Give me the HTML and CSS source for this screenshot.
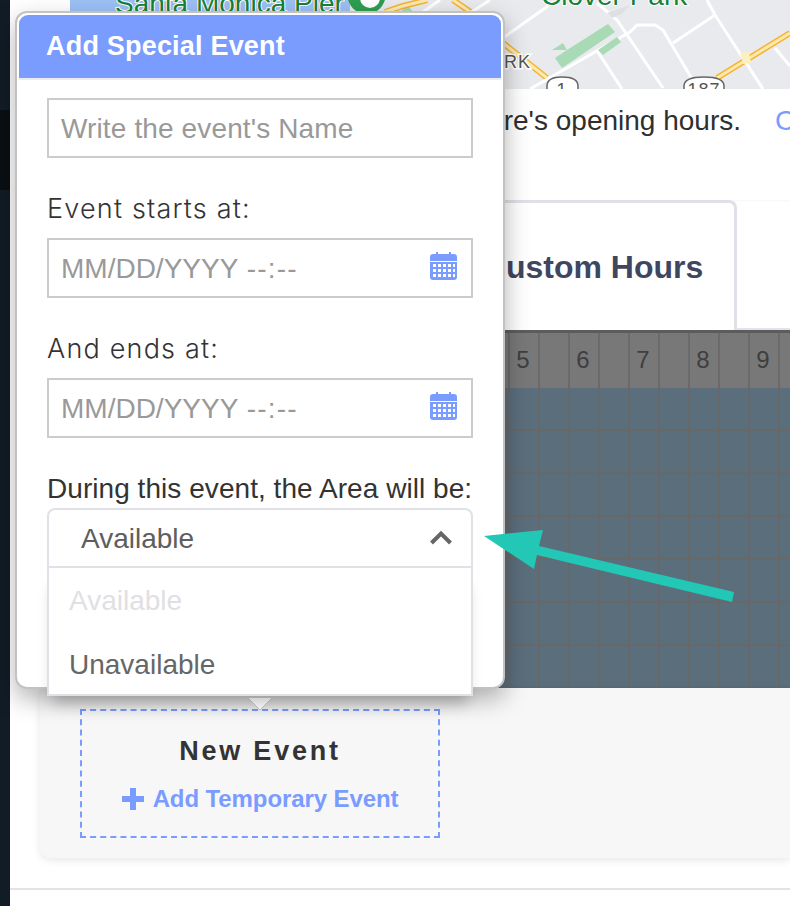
FILE: index.html
```html
<!DOCTYPE html>
<html lang="en">
<head>
<meta charset="utf-8">
<title>Add Special Event</title>
<link rel="stylesheet" href="styles.css">
</head>
<body>
<div class="page">
  <aside class="rail"></aside>
  <main class="main">
    <svg class="map" width="720" height="89" viewBox="70 0 720 89" aria-label="Map">
      <rect x="70" y="0" width="720" height="89" fill="#e8eaed"/>
      <rect x="70" y="0" width="280" height="89" fill="#9cc0f5"/>
      <path fill="#a8dab5" d="M398 13L408 6L414 13Z"/>
      <path class="road" d="M420 14L440 0"/>
      <path class="road-hw" d="M385 12L403 6L427 0M453 0L472 13M503 43L547 78M717 78L790 33"/>
      <path class="road-hw-in" d="M385 12L403 6L427 0M453 0L472 13M503 43L547 78M717 78L790 33"/>
      <path class="road" d="M503 38L548 6M597 3L617 20L663 88M530 89L630 32L637 25L655 25L663 30L698 89M673 43L715 15L763 89M707 0L715 15M598 52L622 89M775 48L790 66M470 13L490 0"/>
      <path fill="#dfe0e4" d="M607 13L630 5L622 14L612 18Z"/>
      <path fill="#a8dab5" d="M552 50L563 43L567 50L608 24L615 32L562 68L555 58L567 50Z"/>
      <path fill="#a8dab5" d="M598 50L617 37L621 42L603 55Z"/>
      <path fill="#fdf0c0" d="M740 53L749 52L751 63L743 64Z"/>
      <circle cx="366.500" cy="-5" r="19" fill="#2e9e4f"/>
      <circle cx="370" cy="-2" r="10" fill="#fff"/>
      <text class="map-label" x="115" y="13">Santa Monica Pier</text>
      <text class="map-label" x="541" y="5">Clover Park</text>
      <text class="map-small" x="531" y="68" text-anchor="end">ARK</text>
      <path class="shield" d="M547 92V86Q547 77 562 77Q578 77 578 86V92"/>
      <text class="map-shield-num" x="562" y="96" text-anchor="middle">1</text>
      <path class="shield" d="M684 92V86Q684 77 704 77Q724 77 724 86V92"/>
      <text class="map-shield-num" x="704" y="96" text-anchor="middle">187</text>
    </svg>
    <div class="intro">
      <p class="intro-text">store's opening hours.</p>
      <a class="intro-link">Change</a>
    </div>
    <div class="tabs">
      <div class="tab">Custom Hours</div>
    </div>
    <section class="schedule">
      <div class="hours">
        <span class="hour">5</span><span class="hour">6</span><span class="hour">7</span><span class="hour">8</span><span class="hour">9</span>
      </div>
      <div class="slots"></div>
    </section>
    <section class="card">
      <div class="new-event">
        <div class="new-title">New Event</div>
        <a class="new-link">
          <svg class="plus" width="22" height="22" viewBox="0 0 22 22"><path d="M8 0h6v8h8v6h-8v8H8v-8H0V8h8z"/></svg>
          <span>Add Temporary Event</span>
        </a>
      </div>
    </section>
    <hr class="rule">
  </main>
</div>

<div class="popup">
  <header class="popup-head">Add Special Event</header>
  <div class="popup-body">
    <div class="field"><span class="ph ph-name">Write the event's Name</span></div>
    <label class="label">Event starts at:</label>
    <div class="field">
      <span class="ph ph-date">MM/DD/YYYY <span class="ph-time">--:--</span></span>
      <svg class="cal" width="27" height="28" viewBox="0 0 27 28">
        <path fill="#7a9cff" d="M3 2h3V0h2v2h11V0h2v2h3q3 0 3 3v4H0V5q0-3 3-3zM0 10h27v15q0 3-3 3H3q-3 0-3-3z"/>
        <path fill="#fff" d="M3 12h3v3H3zM8 12h3v3H8zM13 12h3v3h-3zM18 12h3v3h-3zM23 12h2v3h-2zM3 17h3v3H3zM8 17h3v3H8zM13 17h3v3h-3zM18 17h3v3h-3zM23 17h2v3h-2zM3 22h3v3H3zM8 22h3v3H8zM13 22h3v3h-3zM18 22h3v3h-3zM23 22h2v3h-2z"/>
      </svg>
    </div>
    <label class="label">And ends at:</label>
    <div class="field">
      <span class="ph ph-date">MM/DD/YYYY <span class="ph-time">--:--</span></span>
      <svg class="cal" width="27" height="28" viewBox="0 0 27 28">
        <path fill="#7a9cff" d="M3 2h3V0h2v2h11V0h2v2h3q3 0 3 3v4H0V5q0-3 3-3zM0 10h27v15q0 3-3 3H3q-3 0-3-3z"/>
        <path fill="#fff" d="M3 12h3v3H3zM8 12h3v3H8zM13 12h3v3h-3zM18 12h3v3h-3zM23 12h2v3h-2zM3 17h3v3H3zM8 17h3v3H8zM13 17h3v3h-3zM18 17h3v3h-3zM23 17h2v3h-2zM3 22h3v3H3zM8 22h3v3H8zM13 22h3v3h-3zM18 22h3v3h-3zM23 22h2v3h-2z"/>
      </svg>
    </div>
    <div class="during">During this event, the Area will be:</div>
    <div class="select">
      <div class="select-head">
        <span class="select-value">Available</span>
        <svg class="chevron" width="22" height="15" viewBox="0 0 22 15"><path d="M1.500 13L11 3.500l9.500 9.500" fill="none" stroke="#666" stroke-width="4"/></svg>
      </div>
      <div class="select-menu">
        <div class="option option-off">Available</div>
        <div class="option">Unavailable</div>
      </div>
    </div>
  </div>
  <svg class="pointer" width="26" height="13" viewBox="0 0 26 13"><path d="M1 0L13 12L25 0" fill="#fff" stroke="#c4c4c4"/></svg>
</div>

<svg class="callout" width="254" height="76" viewBox="484 528 254 76" aria-hidden="true">
  <path fill="#22c7b6" d="M484 536L543 530L539 546L734 592L732 602L537 555L534 569Z"/>
</svg>
</body>
</html>
```
FILE: styles.css
```css
* { box-sizing: border-box; }
html, body { margin: 0; padding: 0; }
body {
  width: 790px;
  height: 906px;
  overflow: hidden;
  position: relative;
  background: #fff;
  font-family: "Liberation Sans", Arial, sans-serif;
  color: #333;
}
.page { display: flex; height: 906px; }
.rail {
  flex: 0 0 10px;
  background: linear-gradient(#121c26 0, #121c26 110px, #0a0f14 110px, #0a0f14 190px, #121c26 190px);
}
.main { flex: 1; min-width: 0; display: flex; flex-direction: column; }

.map { display: block; margin-left: 60px; flex: none; }
.road { fill: none; stroke: #fff; stroke-width: 3; }
.road-hw { fill: none; stroke: #f5b32e; stroke-width: 6; }
.road-hw-in { fill: none; stroke: #fde9b0; stroke-width: 3; }
.map-label { font-size: 28px; fill: #188038; stroke: #fff; stroke-width: 2px; paint-order: stroke; }
.map-small { font-size: 18px; letter-spacing: 1px; fill: #555; stroke: #fff; stroke-width: 3px; paint-order: stroke; }
.map-shield-num { font-size: 18px; letter-spacing: 1px; fill: #555; }
.shield { fill: #fff; stroke: #666; stroke-width: 1.5; }

.intro { height: 111px; flex: none; display: flex; gap: 34px; margin-left: 60px; white-space: nowrap; }
.intro-text { margin: 0; flex: 0 0 671px; padding-top: 16px; text-align: right; font-size: 28px; line-height: 32px; color: #2f2f2f; }
.intro-link { padding-top: 16px; font-size: 28px; line-height: 32px; color: #7a9cff; }

.tabs {
  height: 130px;
  flex: none;
  margin-left: 30px;
  padding-left: 403px;
  display: flex;
  border-bottom: 2px solid #e2e3ec;
  background: linear-gradient(#f6f6f6 0, #fff 2px);
}
.tab {
  width: 294px;
  margin-bottom: -2px;
  border: 3px solid #dfe0e8;
  border-bottom: none;
  border-left: none;
  border-radius: 0 8px 0 0;
  background: #fff;
  display: flex;
  align-items: center;
  justify-content: center;
  font-size: 32px;
  font-weight: 700;
  color: #3f4661;
  padding: 2px 0 0 9px;
}

.schedule { height: 358px; flex: none; margin-left: 30px; border-top: 3px solid #5c5c5c; display: flex; flex-direction: column; }
.hours {
  height: 55px;
  flex: none;
  display: flex;
  padding-left: 468px;
  background-color: #787878;
  background-image: linear-gradient(90deg, transparent 28px, #6a6a6a 28px);
  background-size: 30px 100%;
  background-position: -10px 0;
}
.hour { flex: 0 0 60px; padding-right: 30px; text-align: center; font-size: 24px; line-height: 54px; color: #3f3f3f; }
.slots {
  flex: 1;
  background-color: #5b6e7c;
  background-image:
    linear-gradient(90deg, transparent 28px, #686868 28px),
    linear-gradient(transparent 41px, #686868 41px);
  background-size: 30px 100%, 100% 43px;
  background-position: -10px 0, 0 0;
}

.card {
  height: 170px;
  flex: none;
  margin-left: 30px;
  padding: 21px 0 0 40px;
  background: #f7f7f7;
  border-radius: 0 0 0 10px;
  box-shadow: 0 2px 8px rgba(0,0,0,.1);
}
.new-event {
  width: 360px;
  height: 129px;
  border: 2px dashed #7a9cff;
  display: flex;
  flex-direction: column;
  align-items: center;
  padding-top: 24px;
}
.new-title { font-size: 27px; line-height: 32px; font-weight: 700; letter-spacing: 2.8px; color: #333; }
.new-link { margin-top: 17px; display: flex; align-items: center; gap: 9px; font-size: 24px; line-height: 30px; font-weight: 700; letter-spacing: -.1px; color: #7a9cff; }
.plus { fill: #7a9cff; }

.rule { margin: 30px 0 0; height: 2px; border: 0; background: #e3e3e3; flex: none; }

.popup {
  position: absolute;
  left: 15px;
  top: 11px;
  width: 490px;
  height: 678px;
  background: #fff;
  border: 2px solid #c2c2c2;
  border-radius: 12px;
  padding: 2px 2px 0;
  box-shadow: 0 10px 24px rgba(0,0,0,.3);
}
.popup-head {
  height: 65px;
  background: #7a9cff;
  border-bottom: 2px solid #ececec;
  border-radius: 9px 9px 0 0;
  padding-left: 27px;
  color: #fff;
  font-size: 27px;
  font-weight: 700;
  letter-spacing: .2px;
  line-height: 62px;
}
.popup-body { padding: 18px 28px 0; position: relative; }
.field {
  height: 60px;
  border: 2px solid #cccccc;
  padding: 0 14px 0 12px;
  display: flex;
  align-items: center;
  justify-content: space-between;
}
.ph { font-size: 28px; color: #999; padding-top: 1px; }
.ph-name { letter-spacing: .13px; }
.ph-date { word-spacing: 1px; }
.ph-time { letter-spacing: 1.2px; }
.cal { margin-top: -4px; }
.label {
  display: block;
  margin: 32px 0 11px;
  height: 37px;
  line-height: 37px;
  font-family: Inter, "Liberation Sans", sans-serif;
  font-weight: 300;
  font-size: 27px;
  letter-spacing: 1.2px;
  color: #333;
}
.during { margin-top: 32px; height: 38px; line-height: 38px; font-size: 28px; letter-spacing: .05px; color: #333; white-space: nowrap; }
.select { position: relative; }
.select-head {
  height: 60px;
  border: 2px solid #e0e0e6;
  border-radius: 8px 8px 0 0;
  padding: 0 19px 0 32px;
  display: flex;
  align-items: center;
  justify-content: space-between;
  font-size: 28px;
  color: #5e5e5e;
  background: #fff;
}
.select-value { padding-top: 2px; }
.chevron { margin-top: -2px; }
.select-menu {
  position: absolute;
  left: 0;
  right: 0;
  top: 60px;
  height: 128px;
  background: #fff;
  border: 2px solid #e0e0e6;
  border-top: none;
  z-index: 2;
  padding: 0 0 0 20px;
  box-shadow: 0 14px 14px -6px rgba(0,0,0,.22);
}
.option { height: 64px; line-height: 66px; font-size: 28px; color: #666; }
.option-off { color: #dfe0e4; }
.pointer { position: absolute; left: 230px; top: 685px; }

.callout { position: absolute; left: 484px; top: 528px; }
```
